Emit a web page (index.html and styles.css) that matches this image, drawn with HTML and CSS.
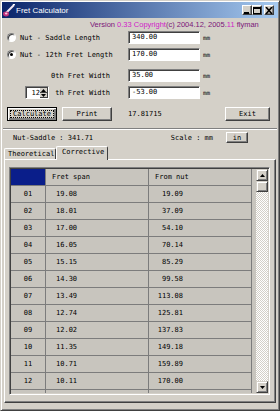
FILE: index.html
```html
<!DOCTYPE html>
<html lang="en">
<head>
  <meta charset="UTF-8">
  <title>Fret Calculator</title>
  <link rel="stylesheet" href="styles.css">
</head>
<body>
  <div class="window">
    <div class="titlebar">
      <svg class="app-icon" width="12" height="13" viewBox="0 0 12 13">
        <path d="M3 9 L11 1" stroke="#f4e8f4" stroke-width="2"/>
        <path d="M10 1 L12 0" stroke="#ffffff" stroke-width="1.5"/>
        <ellipse cx="3" cy="10" rx="3" ry="2.4" fill="#c0307a"/>
        <ellipse cx="3.2" cy="9.6" rx="1.3" ry="1" fill="#f8c8e0"/>
      </svg>
      <span class="title">Fret Calculator</span>
      <div class="title-btns">
        <span class="tbtn"><svg width="8" height="7" viewBox="0 0 8 7"><rect x="1" y="5" width="5" height="2" fill="#000"/></svg></span>
        <span class="tbtn"><svg width="8" height="7" viewBox="0 0 8 7"><rect x="0.5" y="0.5" width="7" height="6" fill="none" stroke="#000"/><rect x="0" y="0" width="8" height="2" fill="#000"/></svg></span>
        <span class="tbtn close"><svg width="8" height="7" viewBox="0 0 8 7"><path d="M1 0 L7 7 M7 0 L1 7" stroke="#000" stroke-width="1.6"/></svg></span>
      </div>
    </div>

    <div class="client">
      <div class="version">
        <span class="dk">Version </span><span class="mg">0.33</span>
        <span class="mg">Copyright</span><span class="dk">(c) 2004.12, 2005.</span><span class="mg">11</span>
        <span class="dk">flyman</span>
      </div>

      <div class="field-row">
        <label class="radio-label"><span class="radio"></span>Nut - Saddle Length</label>
        <span class="field">340.00</span>
        <span class="unit">mm</span>
      </div>
      <div class="field-row gap-s">
        <label class="radio-label"><span class="radio checked"></span>Nut - 12th Fret Length</label>
        <span class="field">170.00</span>
        <span class="unit">mm</span>
      </div>
      <div class="field-row gap-l">
        <span class="plain-label">0th Fret Width</span>
        <span class="field">35.00</span>
        <span class="unit">mm</span>
      </div>
      <div class="field-row gap-s">
        <span class="plain-label spin-label">
          <span class="spinner">
            <span class="spin-value">12</span>
            <span class="spin-btns">
              <span class="spin-btn"><svg width="5" height="3" viewBox="0 0 5 3"><polygon points="2.5,0 5,3 0,3" fill="#000"/></svg></span>
              <span class="spin-btn"><svg width="5" height="3" viewBox="0 0 5 3"><polygon points="0,0 5,0 2.5,3" fill="#000"/></svg></span>
            </span>
          </span>
          <span class="spin-text">th Fret Width</span>
        </span>
        <span class="field">-53.00</span>
        <span class="unit">mm</span>
      </div>

      <div class="button-row">
        <button class="btn calc"><span class="focus">Calculate</span></button>
        <button class="btn print">Print</button>
        <span class="result">17.81715</span>
        <button class="btn exit">Exit</button>
      </div>

      <div class="separator"></div>

      <div class="info-row">
        <span>Nut-Saddle : 341.71</span>
        <span class="scale">Scale : mm</span>
        <button class="btn small">in</button>
      </div>

      <div class="tabs">
        <span class="tab">Theoretical</span>
        <span class="tab active">Corrective</span>
      </div>

      <div class="panel">
        <div class="frame">
          <div class="grid">
            <div class="grid-row head">
              <div class="cell corner"></div>
              <div class="cell h">Fret span</div>
              <div class="cell h">From nut</div>
            </div>
            <div class="grid-row"><div class="cell num">01</div><div class="cell span">19.08</div><div class="cell dist">19.09</div></div>
            <div class="grid-row"><div class="cell num">02</div><div class="cell span">18.01</div><div class="cell dist">37.09</div></div>
            <div class="grid-row"><div class="cell num">03</div><div class="cell span">17.00</div><div class="cell dist">54.10</div></div>
            <div class="grid-row"><div class="cell num">04</div><div class="cell span">16.05</div><div class="cell dist">70.14</div></div>
            <div class="grid-row"><div class="cell num">05</div><div class="cell span">15.15</div><div class="cell dist">85.29</div></div>
            <div class="grid-row"><div class="cell num">06</div><div class="cell span">14.30</div><div class="cell dist">99.58</div></div>
            <div class="grid-row"><div class="cell num">07</div><div class="cell span">13.49</div><div class="cell dist">113.08</div></div>
            <div class="grid-row"><div class="cell num">08</div><div class="cell span">12.74</div><div class="cell dist">125.81</div></div>
            <div class="grid-row"><div class="cell num">09</div><div class="cell span">12.02</div><div class="cell dist">137.83</div></div>
            <div class="grid-row"><div class="cell num">10</div><div class="cell span">11.35</div><div class="cell dist">149.18</div></div>
            <div class="grid-row"><div class="cell num">11</div><div class="cell span">10.71</div><div class="cell dist">159.89</div></div>
            <div class="grid-row"><div class="cell num">12</div><div class="cell span">10.11</div><div class="cell dist">170.00</div></div>
            <div class="grid-row"><div class="cell num">13</div><div class="cell span">9.54</div><div class="cell dist">179.54</div></div>
          </div>
          <div class="scrollbar">
            <span class="sb-btn"><svg width="5" height="3" viewBox="0 0 5 3"><polygon points="2.5,0 5,3 0,3" fill="#000"/></svg></span>
            <span class="sb-thumb"></span>
            <span class="sb-track"></span>
            <span class="sb-btn"><svg width="5" height="3" viewBox="0 0 5 3"><polygon points="0,0 5,0 2.5,3" fill="#000"/></svg></span>
          </div>
        </div>
      </div>
    </div>
  </div>
</body>
</html>
```

FILE: styles.css
```css
* { box-sizing: border-box; }
body {
  margin: 0;
  background: #d4d0c8;
  font-family: "DejaVu Sans Mono", monospace;
  font-size: 7px;
  color: #000;
}
.window {
  width: 280px;
  height: 411px;
  border: 1px solid;
  border-color: #d4d0c8 #404040 #404040 #d4d0c8;
  box-shadow: inset 1px 1px #fff, inset -1px -1px #808080;
  padding: 1px;
  display: flex;
  flex-direction: column;
  overflow: hidden;
}
.titlebar {
  height: 16px;
  display: flex;
  align-items: center;
  padding: 0 4px 0 1px;
  background: linear-gradient(to right, #0a246a, #a6caf0);
}
.app-icon { margin-right: 1px; }
.title {
  font-family: "Liberation Sans", sans-serif;
  font-size: 8px;
  color: #fff;
}
.title-btns {
  margin-left: auto;
  display: flex;
}
.tbtn {
  width: 10px;
  height: 10px;
  display: flex;
  align-items: center;
  justify-content: center;
  background: #d4d0c8;
  border: 1px solid;
  border-color: #fff #404040 #404040 #fff;
  box-shadow: inset -1px -1px #808080;
}
.tbtn.close { margin-left: 2px; }

.client { display: flex; flex-direction: column; }
.version {
  height: 13px;
  line-height: 13px;
  padding-left: 88px;
  font-family: "Liberation Sans", sans-serif;
  font-size: 7.5px;
  white-space: nowrap;
}
.dk { color: #7a1478; }
.mg { color: #d020c8; }

.field-row {
  height: 13px;
  display: flex;
  align-items: center;
  padding-left: 5px;
}
.gap-s { margin-top: 4px; }
.gap-l { margin-top: 8px; }
.radio-label {
  width: 121px;
  display: flex;
  align-items: center;
}
.radio {
  width: 9px;
  height: 9px;
  margin-right: 4px;
  border-radius: 50%;
  background: #fff;
  border: 1px solid;
  border-color: #808080 #fff #fff #808080;
  box-shadow: inset 1px 1px #404040;
  display: flex;
  align-items: center;
  justify-content: center;
}
.radio.checked::after {
  content: "";
  width: 3px;
  height: 3px;
  border-radius: 50%;
  background: #000;
}
.plain-label {
  width: 103px;
  text-align: right;
  margin-right: 18px;
}
.spin-label {
  display: flex;
  align-items: center;
}
.spinner {
  margin-left: 18px;
  width: 24px;
  height: 13px;
  display: flex;
  background: #fff;
  border: 1px solid;
  border-color: #808080 #fff #fff #808080;
  box-shadow: inset 1px 1px #404040;
  padding: 1px 0 0 1px;
}
.spin-value { flex: 1; padding-left: 1px; line-height: 10px; }
.spin-btns { width: 8px; display: flex; flex-direction: column; }
.spin-btn {
  flex: 1;
  display: flex;
  align-items: center;
  justify-content: center;
  background: #d4d0c8;
  border-right: 1px solid #404040;
  border-bottom: 1px solid #404040;
}
.spin-text { margin-left: auto; }
.field {
  width: 72px;
  height: 13px;
  line-height: 11px;
  padding-left: 3px;
  background: #fff;
  border: 1px solid;
  border-color: #808080 #fff #fff #808080;
  box-shadow: inset 1px 1px #404040;
}
.unit { margin-left: 3px; font-size: 6px; }

.button-row {
  height: 14px;
  margin-top: 8px;
  display: flex;
  align-items: center;
  padding-left: 5px;
}
.btn {
  height: 14px;
  padding: 0;
  font-family: "DejaVu Sans Mono", monospace;
  font-size: 7px;
  color: #000;
  background: #d4d0c8;
  border: 1px solid;
  border-color: #fff #404040 #404040 #fff;
  box-shadow: inset -1px -1px #808080;
}
.calc {
  width: 50px;
  border-color: #000;
  box-shadow: inset 1px 1px #fff, inset -2px -2px #808080;
  padding: 2px;
  display: flex;
}
.focus {
  flex: 1;
  display: flex;
  align-items: center;
  justify-content: center;
  border: 1px dotted #000;
}
.print { width: 50px; margin-left: 5px; }
.result { margin-left: 16px; }
.exit { width: 45px; margin-left: auto; margin-right: 8px; }

.separator {
  height: 2px;
  margin: 7px 1px 0;
  border-top: 1px solid #808080;
  border-bottom: 1px solid #fff;
}
.info-row {
  height: 15px;
  display: flex;
  align-items: center;
  padding-left: 11px;
}
.scale { margin-left: auto; }
.btn.small { width: 22px; height: 11px; line-height: 8px; margin: 0 30px 0 13px; }

.tabs {
  height: 14px;
  display: flex;
  align-items: flex-end;
  padding-left: 2px;
}
.tab {
  width: 52px;
  height: 11px;
  line-height: 10px;
  padding-left: 3px;
  border: 1px solid;
  border-bottom: 0;
  border-color: #fff #404040 #404040 #fff;
  border-radius: 2px 2px 0 0;
}
.tab.active {
  height: 14px;
  line-height: 11px;
  padding-left: 5px;
  margin-bottom: -1px;
  position: relative;
  background: #d4d0c8;
}
.panel {
  height: 244px;
  margin: 0 2px;
  padding: 7px 0 0 4px;
  border: 1px solid;
  border-color: #fff #404040 #404040 #fff;
  box-shadow: inset -1px -1px #808080;
}
.frame {
  width: 261px;
  height: 228px;
  display: flex;
  border: 1px solid;
  border-color: #808080 #fff #fff #808080;
  box-shadow: inset 1px 1px #404040, inset -1px -1px #d4d0c8;
  padding: 1px;
}
.grid {
  width: 245px;
  height: 224px;
  overflow: hidden;
  background: #c8c5be;
}
.grid-row {
  display: grid;
  grid-template-columns: 35px 103px 103px;
  height: 17px;
}
.cell {
  border-right: 1px solid #7c7c7c;
  border-bottom: 1px solid #7c7c7c;
  line-height: 16px;
  white-space: nowrap;
}
.corner { background: #0a1e8a; }
.h { padding-left: 6px; }
.num { text-align: center; }
.span { padding-left: 10px; }
.dist { text-align: right; padding-right: 68px; }
.scrollbar {
  width: 12px;
  margin-left: auto;
  display: flex;
  flex-direction: column;
}
.sb-btn, .sb-thumb {
  height: 12px;
  display: flex;
  align-items: center;
  justify-content: center;
  background: #d4d0c8;
  border: 1px solid;
  border-color: #d4d0c8 #404040 #404040 #d4d0c8;
  box-shadow: inset 1px 1px #fff, inset -1px -1px #808080;
}
.sb-thumb { height: 11px; }
.sb-track {
  flex: 1;
  background: repeating-conic-gradient(#fff 0 25%, #d4d0c8 0 50%) 0 0 / 2px 2px;
}
```
